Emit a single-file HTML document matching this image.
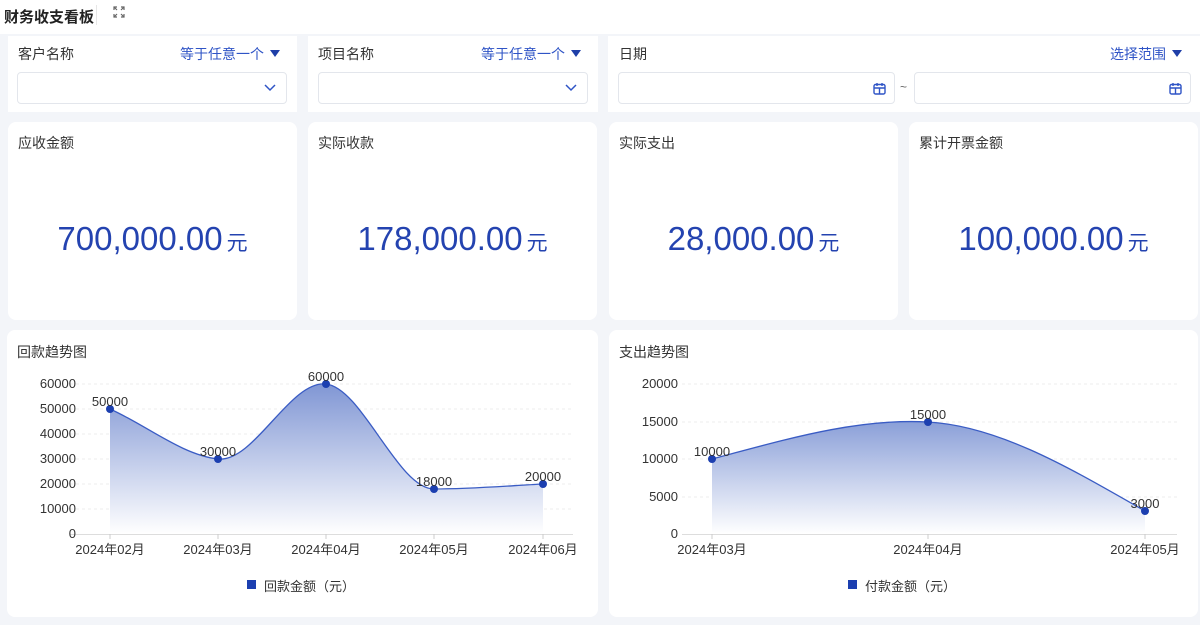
<!DOCTYPE html>
<html><head><meta charset="utf-8"><style>
*{margin:0;padding:0;box-sizing:border-box}
body{width:1200px;height:625px;background:#f3f5f9;font-family:"Liberation Sans","Noto Sans CJK SC",sans-serif;position:relative;overflow:hidden;color:#333}
.a{position:absolute}
.w{background:#fff;position:absolute}
.r{border-radius:8px}
.lbl{font-size:14px;color:#333}
.blue{color:#2f54c6;font-size:14px}
.tri{display:inline-block;width:0;height:0;border-left:5px solid transparent;border-right:5px solid transparent;border-top:7px solid #1f3fa8;margin-left:6px;vertical-align:2px}
.inp{position:absolute;height:32px;border:1px solid #e3e6ec;border-radius:4px;background:#fff}
.num{position:absolute;width:100%;text-align:center;top:98px;font-size:33px;color:#2443b0}
.num small{font-size:21px;margin-left:4px}
</style></head><body>
<div class="w" style="left:0;top:0;width:1200px;height:34px"></div>
<div class="a" style="left:4px;top:6px;font-size:15px;font-weight:bold;color:#222">财务收支看板</div>
<div class="a" style="left:96px;top:5px;width:1px;height:20px;background:#e6e6e6"></div>
<svg class="a" style="left:113px;top:6px" width="12" height="12" viewBox="0 0 12 12" fill="none" stroke="#666" stroke-width="1.2"><path d="M1 4V1h3M8 1h3v3M11 8v3H8M4 11H1V8M1 1l3 3M11 1L8 4M11 11L8 8M1 11l3-3"/></svg>

<div class="w" style="left:8px;top:36px;width:289px;height:76px"></div>
<div class="w" style="left:308px;top:36px;width:290px;height:76px"></div>
<div class="w" style="left:608px;top:36px;width:592px;height:76px"></div>
<div class="a lbl" style="left:18px;top:44px">客户名称</div>
<div class="a blue" style="left:180px;top:44px">等于任意一个<span class="tri"></span></div>
<div class="inp" style="left:17px;top:72px;width:270px"><svg class="a" style="right:10px;top:11px" width="12" height="8" viewBox="0 0 12 8"><path d="M1 1l5 5 5-5" fill="none" stroke="#2f54c6" stroke-width="1.5"/></svg></div>
<div class="a lbl" style="left:318px;top:44px">项目名称</div>
<div class="a blue" style="left:481px;top:44px">等于任意一个<span class="tri"></span></div>
<div class="inp" style="left:318px;top:72px;width:270px"><svg class="a" style="right:10px;top:11px" width="12" height="8" viewBox="0 0 12 8"><path d="M1 1l5 5 5-5" fill="none" stroke="#2f54c6" stroke-width="1.5"/></svg></div>
<div class="a lbl" style="left:619px;top:44px">日期</div>
<div class="a blue" style="left:1110px;top:44px">选择范围<span class="tri"></span></div>
<div class="inp" style="left:618px;top:72px;width:277px"><svg class="a" style="right:8px;top:9px" width="13" height="13" viewBox="0 0 13 13" fill="none" stroke="#2f54c6" stroke-width="1.4"><rect x="1" y="2.5" width="11" height="9.5" rx="1.5"/><path d="M1 6h11M4 1v3M9 1v3M6.5 6v6"/></svg></div>
<div class="a" style="left:900px;top:80px;font-size:12px;color:#666">~</div>
<div class="inp" style="left:914px;top:72px;width:277px"><svg class="a" style="right:8px;top:9px" width="13" height="13" viewBox="0 0 13 13" fill="none" stroke="#2f54c6" stroke-width="1.4"><rect x="1" y="2.5" width="11" height="9.5" rx="1.5"/><path d="M1 6h11M4 1v3M9 1v3M6.5 6v6"/></svg></div>

<div class="w r" style="left:8px;top:122px;width:289px;height:198px"><div class="a lbl" style="left:10px;top:11px">应收金额</div><div class="num">700,000.00<small>元</small></div></div>
<div class="w r" style="left:308px;top:122px;width:289px;height:198px"><div class="a lbl" style="left:10px;top:11px">实际收款</div><div class="num">178,000.00<small>元</small></div></div>
<div class="w r" style="left:609px;top:122px;width:289px;height:198px"><div class="a lbl" style="left:10px;top:11px">实际支出</div><div class="num">28,000.00<small>元</small></div></div>
<div class="w r" style="left:909px;top:122px;width:289px;height:198px"><div class="a lbl" style="left:10px;top:11px">累计开票金额</div><div class="num">100,000.00<small>元</small></div></div>

<div class="w r" style="left:7px;top:330px;width:591px;height:287px"><div class="a lbl" style="left:10px;top:12px">回款趋势图</div></div>
<div class="w r" style="left:609px;top:330px;width:589px;height:287px"><div class="a lbl" style="left:10px;top:12px">支出趋势图</div></div>

<svg class="a" style="left:0;top:0" width="1200" height="625" font-family="Liberation Sans,Noto Sans CJK SC,sans-serif" font-size="13" fill="#333">
<defs><linearGradient id="g" x1="0" y1="0" x2="0" y2="1"><stop offset="0" stop-color="#8096d4"/><stop offset="1" stop-color="#fff"/></linearGradient>
<linearGradient id="g2" x1="0" y1="0" x2="0" y2="1"><stop offset="0" stop-color="#8a9fd8"/><stop offset="1" stop-color="#fff"/></linearGradient></defs>
<g stroke="#eee" stroke-dasharray="3,3"><path d="M70 384H573M70 409H573M70 434H573M70 459H573M70 484H573M70 509H573"/><path d="M682 384H1177M682 422H1177M682 459H1177M682 497H1177"/></g>
<path d="M70 534.5H573M682 534.5H1177" stroke="#ddd"/>
<path d="M110 534v5M218 534v5M326 534v5M434 534v5M543 534v5M712 534v5M928 534v5M1145 534v5" stroke="#ccc"/>
<g text-anchor="end"><text x="76" y="388">60000</text><text x="76" y="413">50000</text><text x="76" y="438">40000</text><text x="76" y="463">30000</text><text x="76" y="488">20000</text><text x="76" y="513">10000</text><text x="76" y="538">0</text>
<text x="678" y="388">20000</text><text x="678" y="426">15000</text><text x="678" y="463">10000</text><text x="678" y="501">5000</text><text x="678" y="538">0</text></g>
<path d="M110 409C146 425 182 455 218 459C254 463 290 380 326 384C362 388 398 489 434 489C470 489 506 486 543 484V534H110Z" fill="url(#g)"/>
<path d="M110 409C146 425 182 455 218 459C254 463 290 380 326 384C362 388 398 489 434 489C470 489 506 486 543 484" fill="none" stroke="#3a5cc4" stroke-width="1.3"/>
<path d="M712 459C784 440 856 418 928 422C1000 426 1073 470 1145 511V534H712Z" fill="url(#g2)"/>
<path d="M712 459C784 440 856 418 928 422C1000 426 1073 470 1145 511" fill="none" stroke="#3a5cc4" stroke-width="1.3"/>
<g fill="#1c3fb0"><circle cx="110" cy="409" r="4"/><circle cx="218" cy="459" r="4"/><circle cx="326" cy="384" r="4"/><circle cx="434" cy="489" r="4"/><circle cx="543" cy="484" r="4"/><circle cx="712" cy="459" r="4"/><circle cx="928" cy="422" r="4"/><circle cx="1145" cy="511" r="4"/></g>
<g text-anchor="middle"><text x="110" y="406">50000</text><text x="218" y="456">30000</text><text x="326" y="381">60000</text><text x="434" y="486">18000</text><text x="543" y="481">20000</text>
<text x="712" y="456">10000</text><text x="928" y="419">15000</text><text x="1145" y="508">3000</text>
<text x="110" y="554">2024年02月</text><text x="218" y="554">2024年03月</text><text x="326" y="554">2024年04月</text><text x="434" y="554">2024年05月</text><text x="543" y="554">2024年06月</text>
<text x="712" y="554">2024年03月</text><text x="928" y="554">2024年04月</text><text x="1145" y="554">2024年05月</text></g>
<rect x="247" y="580" width="9" height="9" fill="#1c3fb0"/><text x="264" y="591">回款金额（元）</text>
<rect x="848" y="580" width="9" height="9" fill="#1c3fb0"/><text x="865" y="591">付款金额（元）</text>
</svg>
</body></html>
